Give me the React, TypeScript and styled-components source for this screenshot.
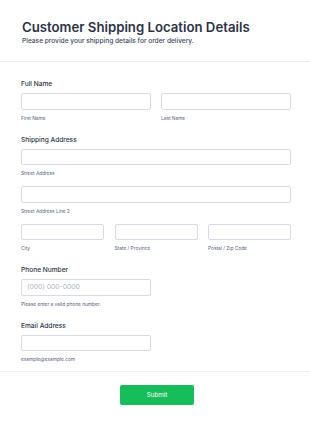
import React from 'react';
import styled, {createGlobalStyle} from 'styled-components';

const GlobalStyle = createGlobalStyle`
    body {
        margin: 0;
        background: #fff;
        font-family: Inter, "Noto Sans", sans-serif;
        color: #2c3345;
    }
`;

const Page = styled.div`
    width: 310px;
`;

const Header = styled.div`
    padding: 17px 19px 15px 22px;
    border-bottom: 1px solid #ebebf0;
`;

const Title = styled.h1`
    margin: 0;
    font-size: 13.2px;
    line-height: 20px;
    font-weight: 600;
    white-space: nowrap;
    color: #2c3345;
`;

const Subtitle = styled.p`
    margin: 0;
    font-size: 6.6px;
    line-height: 9px;
    font-weight: 500;
    color: #3d4a63;
`;

const Body = styled.div`
    padding: 17px 19px 8px 21px;
    border-bottom: 1px solid #f0f0f3;
`;

const Field = styled.div`
    margin-bottom: 13px;
    &:last-child {
        margin-bottom: 0;
    }
`;

const Label = styled.div`
    font-size: 6.6px;
    line-height: 10px;
    font-weight: 500;
    color: #2c3345;
    margin-bottom: 4px;
`;

const Row = styled.div<{$cols: number; $gap: number}>`
    display: grid;
    grid-template-columns: repeat(${p => p.$cols}, 1fr);
    column-gap: ${p => p.$gap}px;
`;

const Stack = styled.div`
    display: flex;
    flex-direction: column;
    gap: 9px;
`;

const Input = styled.div<{$width?: number}>`
    box-sizing: border-box;
    height: 16.5px;
    width: ${p => (p.$width ? `${p.$width}px` : '100%')};
    border: 1px solid #d8dae9;
    border-radius: 2px;
    background: #fff;
    font-size: 6.8px;
    line-height: 14.5px;
    padding-left: 5px;
    color: #b0b4c5;
`;

const Sub = styled.div`
    font-size: 4.8px;
    line-height: 7px;
    color: #57647e;
    margin-top: 5px;
`;

const Footer = styled.div`
    display: flex;
    justify-content: center;
    padding: 13px 17px 0 21px;
`;

const Submit = styled.button`
    width: 74px;
    height: 20px;
    border: none;
    border-radius: 2px;
    background: #18bd5b;
    color: #fff;
    font-family: Inter, "Noto Sans", sans-serif;
    font-size: 6.3px;
    font-weight: 400;
    padding: 0;
`;

const SubInput = ({sub, width, placeholder}: {sub: string; width?: number; placeholder?: string}) => (
    <div>
        <Input $width={width}>{placeholder}</Input>
        <Sub>{sub}</Sub>
    </div>
);

export default function App() {
    return (
        <Page>
            <GlobalStyle/>
            <Header>
                <Title>Customer Shipping Location Details</Title>
                <Subtitle>Please provide your shipping details for order delivery.</Subtitle>
            </Header>
            <Body>
                <Field>
                    <Label>Full Name</Label>
                    <Row $cols={2} $gap={10}>
                        <SubInput sub="First Name"/>
                        <SubInput sub="Last Name"/>
                    </Row>
                </Field>
                <Field>
                    <Label>Shipping Address</Label>
                    <Stack>
                        <SubInput sub="Street Address"/>
                        <SubInput sub="Street Address Line 2"/>
                        <Row $cols={3} $gap={10.5}>
                            <SubInput sub="City"/>
                            <SubInput sub="State / Province"/>
                            <SubInput sub="Postal / Zip Code"/>
                        </Row>
                    </Stack>
                </Field>
                <Field>
                    <Label>Phone Number</Label>
                    <SubInput sub="Please enter a valid phone number." width={130} placeholder="(000) 000-0000"/>
                </Field>
                <Field>
                    <Label>Email Address</Label>
                    <SubInput sub="example@example.com" width={130}/>
                </Field>
            </Body>
            <Footer>
                <Submit>Submit</Submit>
            </Footer>
        </Page>
    );
}
